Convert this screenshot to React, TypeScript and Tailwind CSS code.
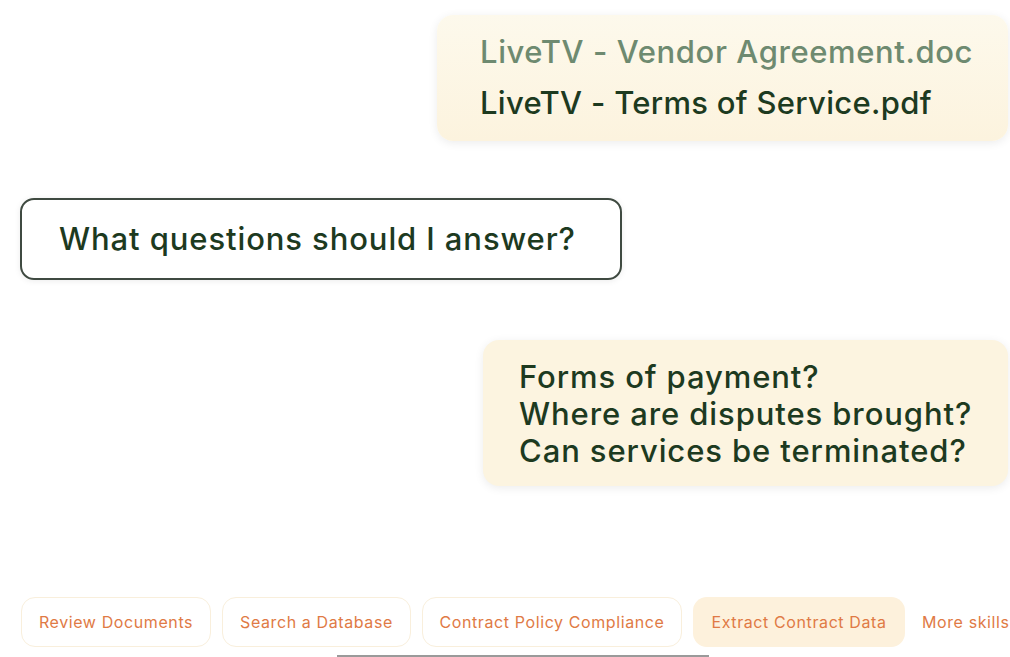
const SKILLS = [
  { label: "Review Documents", w: "w-[190px]" },
  { label: "Search a Database", w: "w-[189px]" },
  { label: "Contract Policy Compliance", w: "w-[260px]" },
];

export default function App() {
  return (
    <div
      className="relative w-[1010px] h-[657px] overflow-hidden bg-white flex flex-col"
      style={{ fontFamily: "Inter, 'Liberation Sans', sans-serif" }}
    >
      {/* attached files */}
      <div className="self-end mt-[15px] mr-[2px] w-[571px] h-[126px] rounded-[16px] bg-gradient-to-b from-[#fdf9ec] to-[#fcf3de] shadow-[0_2px_10px_rgba(0,0,0,0.08)] pl-[43px] flex flex-col justify-center gap-[15px] pb-[2px]">
        <p className="text-[31px] leading-[36px] font-medium text-[#6e8a70] tracking-[0.6px]">
          LiveTV - Vendor Agreement.doc
        </p>
        <p className="text-[31px] leading-[36px] font-medium text-[#1d3a1f] tracking-[0.3px]">
          LiveTV - Terms of Service.pdf
        </p>
      </div>

      {/* user prompt */}
      <div className="ml-[20px] mt-[57px] w-[602px] h-[82px] rounded-[14px] border-2 border-[#3f4a41] shadow-[0_1px_6px_rgba(0,0,0,0.08)] pl-[37px] flex items-center">
        <p className="text-[31px] font-medium text-[#1d3a1f] tracking-[0.9px]">What questions should I answer?</p>
      </div>

      {/* answer */}
      <div className="self-end mt-[60px] mr-[2px] w-[525px] h-[146px] rounded-[16px] bg-[#fcf4e0] shadow-[0_2px_10px_rgba(0,0,0,0.08)] pl-[36px] flex flex-col justify-center">
        <p className="text-[31px] leading-[37px] font-medium text-[#1d3a1f] tracking-[0.9px]">Forms of payment?</p>
        <p className="text-[31px] leading-[37px] font-medium text-[#1d3a1f] tracking-[0.9px]">Where are disputes brought?</p>
        <p className="text-[31px] leading-[37px] font-medium text-[#1d3a1f] tracking-[0.9px]">Can services be terminated?</p>
      </div>

      {/* skills */}
      <div className="mt-[111px] ml-[21px] flex items-center gap-[11px]">
        {SKILLS.map((s) => (
          <button
            key={s.label}
            className={`${s.w} h-[50px] rounded-[14px] border border-[#f9efdc] bg-white text-[16px] tracking-[0.6px] text-[#e07a45] flex items-center justify-center`}
          >
            {s.label}
          </button>
        ))}
        <button className="w-[212px] h-[50px] rounded-[14px] bg-[#fdf1dc] text-[16px] tracking-[0.6px] text-[#e07a45] flex items-center justify-center">
          Extract Contract Data
        </button>
        <span className="ml-[6px] text-[16px] tracking-[0.6px] text-[#e07a45] whitespace-nowrap">More skills</span>
      </div>

      <div className="mt-[8px] ml-[337px] w-[372px] h-[2px] bg-[#9a9a9a]" />
    </div>
  );
}
